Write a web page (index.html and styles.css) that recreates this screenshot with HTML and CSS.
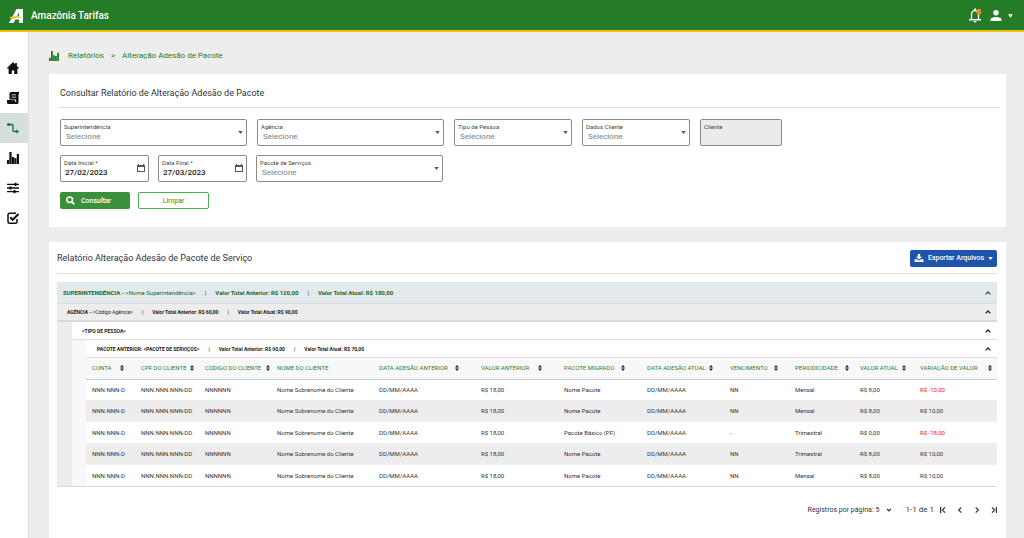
FILE: index.html
```html
<!DOCTYPE html>
<html lang="pt-BR">
<head>
<meta charset="utf-8">
<title>Amazônia Tarifas</title>
<link rel="stylesheet" href="styles.css">
</head>
<body>
<svg class="sprite" aria-hidden="true">
  <symbol id="bars" viewBox="0 0 12 12"><path d="M0 8h2.100v4H0zM2.400 0h2.200v12H2.400zM4.900 5H7v7H4.900zM7.300 6h2.100v6H7.300zM9.800 2H12v10H9.800z"/></symbol>
  <symbol id="caret" viewBox="0 0 6 4"><path d="M0 0h6L3 4z"/></symbol>
  <symbol id="up" viewBox="0 0 6 4"><path d="M.6 3.400L3 1l2.400 2.400" fill="none" stroke="currentColor" stroke-width="1.300"/></symbol>
  <symbol id="sort" viewBox="0 0 4 6"><path d="M0 2.500L2 0l2 2.500zM0 3.500h4L2 6z"/></symbol>
  <symbol id="calendar" viewBox="0 0 8 8"><path d="M1 0h1v1h4V0h1v1h1v7H0V1h1zM1 3v4h6V3z" fill-rule="evenodd"/></symbol>
</svg>
<header class="topbar">
  <svg class="logo" viewBox="0 0 16 14"><path d="M7.500 0H14v14h-4v-3.500H6.500L4.500 14H0zM10 3L8 7.500h2z" fill="#fff" fill-rule="evenodd"/><path d="M0 8.500C4 6.500 9 7 16 9c-5-.6-9-.4-12 1z" fill="#f2c230"/></svg>
  <h1 class="brand">Amazônia Tarifas</h1>
  <button class="icon-btn bell" aria-label="Notificações">
    <svg viewBox="0 0 12 15"><path d="M2.500 11.500V6.500C2.500 4 4 2.500 6 2.500s3.500 1.500 3.500 4v5" fill="none" stroke="#fff" stroke-width="1.300"/><path d="M0 11h12v1.500H0zM5 .5h2v2H5zM4.500 13h3q-.3 1.600-1.500 1.600T4.500 13z" fill="#fff"/><circle cx="10" cy="3.800" r="2.700" fill="#f08a1c"/></svg>
  </button>
  <button class="icon-btn user" aria-label="Conta do usuário">
    <svg class="person" viewBox="0 0 12 12"><circle cx="6" cy="3" r="3"/><path d="M0 12v-1.500C0 8.500 3 7.500 6 7.500s6 1 6 3V12z"/></svg>
    <svg class="caret"><use href="#caret"/></svg>
  </button>
</header>
<div class="shell">
  <nav class="sidebar" aria-label="Principal">
    <a class="nav-item" href="#inicio" aria-label="Início"><svg viewBox="0 0 12 12"><path d="M6 0l2.200 2.200V1h1.700v2.900L12 6l-.8.900-.8-.7V12H7.200V8.500H4.800V12H1.600V6.200l-.8.700L0 6z"/></svg></a>
    <a class="nav-item" href="#tarifas" aria-label="Tarifas"><svg viewBox="0 0 12 12"><path d="M4 0h8v2h-.5v8H9.500L8.500 7.500H2.500V2Q2.500 0 4 0zM4.500 2.500v.8h4.500v-.8zM4.500 4.700v.8h4.500v-.8z" fill-rule="evenodd"/><path d="M0 8h7.500l1 2h3v.5q0 1.500-1.500 1.500H1.500Q0 12 0 10.500z"/></svg></a>
    <a class="nav-item active" href="#adesao" aria-label="Adesão"><svg viewBox="0 0 12 12"><path d="M1 2.500h4q1 0 1 1v5q0 1 1 1h4" fill="none" stroke="currentColor" stroke-width="1.300"/><circle cx="1.500" cy="2.500" r="1.500"/><path d="M9.500 7.300l2.500 2.200-2.500 2.200z"/></svg></a>
    <a class="nav-item" href="#relatorios" aria-label="Relatórios"><svg><use href="#bars"/></svg></a>
    <a class="nav-item" href="#parametros" aria-label="Parâmetros"><svg viewBox="0 0 12 12"><path d="M0 1.700h12v1.400H0zM0 5.300h12v1.400H0zM0 8.900h12v1.400H0zM7.500.8h2V4h-2zM2.500 4.400h2v3.200h-2zM6.500 8h2v3.200h-2z"/></svg></a>
    <a class="nav-item" href="#aprovacoes" aria-label="Aprovações"><svg viewBox="0 0 12 12"><path d="M10 7v2.700q0 1.500-1.500 1.500h-6Q1 11.200 1 9.700v-7q0-1.500 1.500-1.500H9" fill="none" stroke="currentColor" stroke-width="1.500"/><path d="M3.200 5.200l2.500 2.600 5.800-5.800" fill="none" stroke="currentColor" stroke-width="2"/></svg></a>
  </nav>
  <main class="content">
    <nav class="crumbs" aria-label="Trilha">
      <svg class="crumb-icon"><use href="#bars"/></svg>
      <a href="#relatorios">Relatórios</a><span>&gt;</span><a href="#adesao">Alteração Adesão de Pacote</a>
    </nav>
    <form class="card search">
      <h2 class="card-title">Consultar Relatório de Alteração Adesão de Pacote</h2>
      <div class="fields">
        <div class="field wide"><label for="sup">Superintendência</label><select id="sup"><option>Selecione</option></select><svg class="caret"><use href="#caret"/></svg></div>
        <div class="field wide"><label for="age">Agência</label><select id="age"><option>Selecione</option></select><svg class="caret"><use href="#caret"/></svg></div>
        <div class="field medium"><label for="tipo">Tipo de Pessoa</label><select id="tipo"><option>Selecione</option></select><svg class="caret"><use href="#caret"/></svg></div>
        <div class="field compact"><label for="dados">Dados Cliente</label><select id="dados"><option>Selecione</option></select><svg class="caret"><use href="#caret"/></svg></div>
        <div class="field small disabled"><label for="cli">Cliente</label><input id="cli" type="text" disabled></div>
      </div>
      <div class="fields second">
        <div class="field date"><label for="ini">Data Inicial *</label><input id="ini" type="text" value="27/02/2023"><svg class="calendar"><use href="#calendar"/></svg></div>
        <div class="field date"><label for="fim">Data Final *</label><input id="fim" type="text" value="27/03/2023"><svg class="calendar"><use href="#calendar"/></svg></div>
        <div class="field wide"><label for="pac">Pacote de Serviços</label><select id="pac"><option>Selecione</option></select><svg class="caret"><use href="#caret"/></svg></div>
      </div>
      <div class="actions">
        <button type="button" class="btn primary"><svg viewBox="0 0 9 9"><circle cx="3.700" cy="3.700" r="2.800" fill="none" stroke="currentColor" stroke-width="1.500"/><path d="M5.800 5.800L8.400 8.400" stroke="currentColor" stroke-width="1.700"/></svg>Consultar</button>
        <button type="button" class="btn outline">Limpar</button>
      </div>
    </form>
    <section class="card report">
      <div class="report-head">
        <h2 class="card-title">Relatório Alteração Adesão de Pacote de Serviço</h2>
        <button class="btn export"><svg class="download" viewBox="0 0 10 9"><path d="M3.700 0h2.600v3h2.200L5 6.200 1.500 3h2.200z"/><path d="M0 5.800h2.800L5 7.600l2.200-1.800H10V9H0z"/></svg>Exportar Arquivos<svg class="caret"><use href="#caret"/></svg></button>
      </div>
      <div class="group-sup">
        <div class="bar sup"><b>SUPERINTENDÊNCIA - <span class="light">&lt;Nome Superintendência&gt;</span></b><b>|</b><b>Valor Total Anterior: R$ 120,00</b><b>|</b><b>Valor Total Atual: R$ 180,00</b><button aria-label="Recolher superintendência"><svg><use href="#up"/></svg></button></div>
        <div class="bar agency"><b>AGÊNCIA - <span class="light">&lt;Código Agência&gt;</span></b><b>|</b><b>Valor Total Anterior: R$ 60,00</b><b>|</b><b>Valor Total Atual: R$ 90,00</b><button aria-label="Recolher agência"><svg><use href="#up"/></svg></button></div>
        <div class="group-type">
          <div class="bar type"><b>&lt;TIPO DE PESSOA&gt;</b><button aria-label="Recolher tipo de pessoa"><svg><use href="#up"/></svg></button></div>
          <div class="group-package">
            <div class="bar package"><b>PACOTE ANTERIOR: &lt;PACOTE DE SERVIÇOS&gt;</b><b>|</b><b>Valor Total Anterior: R$ 90,00</b><b>|</b><b>Valor Total Atual: R$ 70,00</b><button aria-label="Recolher pacote"><svg><use href="#up"/></svg></button></div>
            <table class="grid">
              <colgroup><col class="c-account"><col class="c-cpf"><col class="c-code"><col class="c-date"><col class="c-date"><col class="c-value"><col class="c-value"><col class="c-value"><col class="c-due"><col class="c-due"><col class="c-current"><col class="c-change"></colgroup>
              <thead><tr>
                <th class="g3"><button>CONTA<svg><use href="#sort"/></svg></button></th>
                <th class="g1"><button>CPF DO CLIENTE<svg><use href="#sort"/></svg></button></th>
                <th class="g0"><button>CÓDIGO DO CLIENTE<svg><use href="#sort"/></svg></button></th>
                <th>NOME DO CLIENTE</th>
                <th class="g4"><button>DATA ADESÃO ANTERIOR<svg><use href="#sort"/></svg></button></th>
                <th class="g4"><button>VALOR ANTERIOR<svg><use href="#sort"/></svg></button></th>
                <th class="g4"><button>PACOTE MIGRADO<svg><use href="#sort"/></svg></button></th>
                <th class="g3"><button>DATA ADESÃO ATUAL<svg><use href="#sort"/></svg></button></th>
                <th class="g3"><button>VENCIMENTO<svg><use href="#sort"/></svg></button></th>
                <th class="g1"><button>PERIODICIDADE<svg><use href="#sort"/></svg></button></th>
                <th class="g2"><button>VALOR ATUAL<svg><use href="#sort"/></svg></button></th>
                <th class="g1"><button>VARIAÇÃO DE VALOR<svg><use href="#sort"/></svg></button></th>
              </tr></thead>
              <tbody>
                <tr><td>NNN.NNN-D</td><td>NNN.NNN.NNN-DD</td><td>NNNNNN</td><td>Nome Sobrenome do Cliente</td><td>DD/MM/AAAA</td><td>R$ 18,00</td><td>Nome Pacote</td><td>DD/MM/AAAA</td><td>NN</td><td>Mensal</td><td>R$ 8,00</td><td class="neg">R$ -10,00</td></tr>
                <tr><td>NNN.NNN-D</td><td>NNN.NNN.NNN-DD</td><td>NNNNNN</td><td>Nome Sobrenome do Cliente</td><td>DD/MM/AAAA</td><td>R$ 18,00</td><td>Nome Pacote</td><td>DD/MM/AAAA</td><td>NN</td><td>Mensal</td><td>R$ 8,00</td><td>R$ 10,00</td></tr>
                <tr><td>NNN.NNN-D</td><td>NNN.NNN.NNN-DD</td><td>NNNNNN</td><td>Nome Sobrenome do Cliente</td><td>DD/MM/AAAA</td><td>R$ 18,00</td><td>Pacote Básico (PF)</td><td>DD/MM/AAAA</td><td>-</td><td>Trimestral</td><td>R$ 0,00</td><td class="neg">R$ -18,00</td></tr>
                <tr><td>NNN.NNN-D</td><td>NNN.NNN.NNN-DD</td><td>NNNNNN</td><td>Nome Sobrenome do Cliente</td><td>DD/MM/AAAA</td><td>R$ 18,00</td><td>Nome Pacote</td><td>DD/MM/AAAA</td><td>NN</td><td>Trimestral</td><td>R$ 8,00</td><td>R$ 10,00</td></tr>
                <tr><td>NNN.NNN-D</td><td>NNN.NNN.NNN-DD</td><td>NNNNNN</td><td>Nome Sobrenome do Cliente</td><td>DD/MM/AAAA</td><td>R$ 18,00</td><td>Nome Pacote</td><td>DD/MM/AAAA</td><td>NN</td><td>Mensal</td><td>R$ 8,00</td><td>R$ 10,00</td></tr>
              </tbody>
            </table>
          </div>
        </div>
      </div>
      <div class="pager">
        <label for="pp">Registros por página:</label>
        <select id="pp"><option>5</option></select>
        <svg class="chev" viewBox="0 0 6 4"><path d="M1 .8l2 2 2-2"/></svg>
        <span class="range">1-1 de 1</span>
        <button aria-label="Primeira página"><svg viewBox="0 0 6 6"><path d="M.6 0v6M5 .4L2.400 3 5 5.600"/></svg></button>
        <button aria-label="Página anterior"><svg viewBox="0 0 6 6"><path d="M4.300.4L1.700 3l2.600 2.600"/></svg></button>
        <button aria-label="Próxima página"><svg viewBox="0 0 6 6"><path d="M1.700.4L4.300 3 1.700 5.600"/></svg></button>
        <button aria-label="Última página"><svg viewBox="0 0 6 6"><path d="M5.400 0v6M1 .4L3.600 3 1 5.600"/></svg></button>
      </div>
    </section>
  </main>
</div>
</body>
</html>
```
FILE: styles.css
```css
* { box-sizing: border-box; }
body {
  margin: 0;
  min-height: 100vh;
  display: flex;
  flex-direction: column;
  background: #ededed;
  color: #333;
  font: 8px/12px Roboto, "Liberation Sans", sans-serif;
}
button, select, input { font: inherit; color: inherit; border: 0; padding: 0; background: none; }
select { appearance: none; }
svg { fill: currentColor; display: block; flex: none; }
a { color: inherit; text-decoration: none; }
h1, h2 { margin: 0; font-weight: 400; }
.sprite { display: none; }
.caret { width: 5px; height: 3px; }

.topbar {
  display: flex;
  align-items: center;
  height: 32px;
  padding: 1px 11px 0 9px;
  background: #257c27;
  border-bottom: 2px solid #f2bd0d;
  color: #fff;
}
.logo { width: 16px; height: 14px; }
.brand { margin: 0 auto 0 6px; font-size: 10px; font-weight: 500; }
.icon-btn { display: flex; align-items: center; }
.bell svg { width: 12px; height: 15px; }
.user { gap: 6px; margin-left: 9px; }
.person { width: 12px; height: 11px; }
.user .caret { height: 4px; }

.shell { display: flex; flex: 1; }
.sidebar { width: 29px; flex: none; padding-top: 21px; background: #fff; border-right: 1px solid #ddd; color: #111; }
.nav-item { display: flex; align-items: center; justify-content: center; height: 30px; padding-right: 2px; }
.nav-item svg { width: 12px; height: 12px; }
.nav-item.active { background: #d5dfdd; color: #14703f; }

.content { flex: 1; min-width: 0; display: flex; flex-direction: column; padding: 18px 18px 0 20px; }
.crumbs { display: flex; align-items: center; gap: 7px; height: 12px; margin-bottom: 12px; color: #257c27; }
.crumb-icon { width: 10px; height: 10px; margin-right: 2px; }
.card { background: #fff; }
.card-title { font-size: 9px; line-height: 14px; }

.search { padding: 12px 6px 18px 11px; margin-bottom: 15px; }
.search .card-title { padding-bottom: 7px; margin-bottom: 11px; border-bottom: 1px solid #ddd; }
.fields { display: flex; gap: 10px; margin-bottom: 9px; }
.second { gap: 9px; }
.field {
  display: grid;
  grid-template-columns: 1fr auto;
  grid-template-rows: 9px 11px;
  align-items: center;
  height: 27px;
  padding: 2px 3px;
  border: 1px solid #8b8b8b;
  border-radius: 2px;
}
.field label { font-size: 6px; line-height: 9px; color: #444; }
.field select, .field input { grid-row: 2; min-width: 0; width: 100%; height: 11px; line-height: 11px; padding-left: 2px; color: #808080; }
.field input { font-weight: 500; padding-left: 1px; color: #222; }
.field svg { grid-column: 2; grid-row: 1 / 3; color: #555; }
.calendar { width: 8px; height: 8px; }
.wide { flex: 0 1 187px; }
.medium { flex: 0 1 118px; }
.compact { flex: 0 1 108px; }
.small { flex: 0 1 82px; }
.date { flex: 0 1 89px; }
.disabled { background: #ebebeb; }

.actions { display: flex; gap: 8px; padding-top: 1px; }
.btn { display: flex; align-items: center; height: 17px; border-radius: 2px; font-size: 7px; }
.primary { width: 70px; gap: 6px; padding-left: 6px; background: #3a913c; color: #fff; font-weight: 500; }
.primary svg { width: 9px; height: 9px; }
.outline { width: 71px; justify-content: center; border: 1px solid #4caf50; color: #2f8f33; }

.report { flex: 1; padding: 8px 9px 20px 8px; }
.report-head { display: flex; justify-content: space-between; align-items: center; height: 24px; padding-bottom: 7px; margin-bottom: 8px; border-bottom: 1px solid #ddd; }
.export { gap: 4px; padding: 0 4px; background: #1f54ab; color: #fff; font-weight: 500; }
.download { width: 10px; height: 8px; }

.group-sup { background: #ededed; border-bottom: 1px solid #d8d8d8; }
.bar { display: flex; align-items: center; gap: 9px; padding-right: 6px; font-size: 5px; line-height: 8px; color: #222; }
.bar button { margin-left: auto; }
.bar svg { width: 6px; height: 4px; }
.light { font-weight: 400; }
.sup { height: 22px; padding-left: 6px; font-size: 6px; background: #e4e9ee; border-bottom: 1px solid #d8dde0; color: #17691d; }
.agency { height: 18px; padding-left: 10px; border-bottom: 2px solid #d8d8d8; }
.group-type { margin-left: 15px; background: #f8f8f8; }
.type { height: 18px; padding-left: 10px; background: #fff; border-bottom: 1px solid #ddd; }
.group-package { margin-left: 14px; background: #fff; }
.package { height: 18px; padding-left: 11px; border-bottom: 1px solid #ddd; }

.grid { width: 100%; table-layout: fixed; border-collapse: collapse; font-size: 6px; line-height: 8px; }
.grid th, .grid td { padding: 0 0 0 6px; text-align: left; white-space: nowrap; font-weight: 400; }
.grid th { height: 21px; background: #f8f8f8; border-bottom: 1px solid #c3ced6; color: #2a7d30; }
.grid th button { display: flex; width: 100%; align-items: center; justify-content: space-between; }
.grid th svg { width: 4px; height: 6px; color: #1a1f3c; }
.grid td { height: 21px; }
.grid tbody tr:nth-child(even) td { height: 22px; background: #ededed; }
.grid .g0 { padding-right: 1px; }
.grid .g1 { padding-right: 5px; }
.grid .g2 { padding-right: 8px; }
.grid .g3 { padding-right: 11px; }
.grid .g4 { padding-right: 16px; }
.grid .neg { color: #f02020; }
.c-account { width: 49px; }
.c-cpf { width: 64px; }
.c-due { width: 65px; }
.c-code { width: 72px; }
.c-date { width: 102px; }
.c-value { width: 83px; }
.c-current { width: 60px; }
.c-change { width: 83px; }

.pager { display: flex; align-items: center; justify-content: flex-end; padding-top: 17px; font-size: 7px; }
.pager select { margin-left: 2px; }
.pager svg { width: 6px; height: 6px; fill: none; stroke: currentColor; stroke-width: 1.200; }
.pager .chev { margin-left: 6px; height: 4px; }
.range { margin: 0 6px 0 14px; font-size: 8px; }
.pager button + button { margin-left: 11px; }
```
